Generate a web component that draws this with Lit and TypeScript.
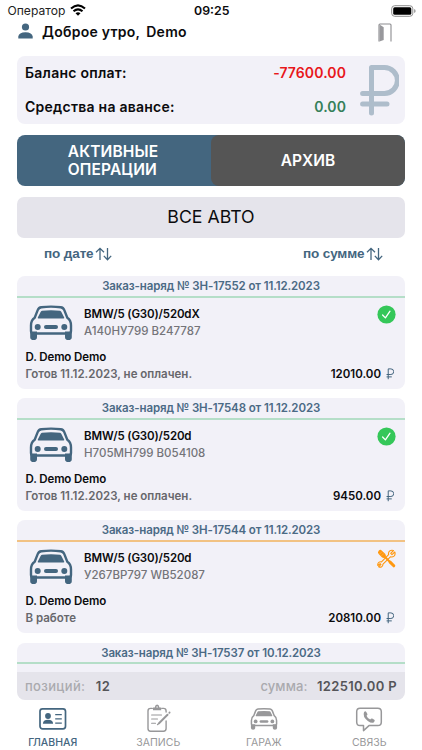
import { LitElement, html, css, svg, nothing } from "lit";
import { customElement, property } from "lit/decorators.js";

type Status = "done" | "work";

interface Order {
  title: string;
  status: Status;
  car?: string;
  plate?: string;
  owner?: string;
  state?: string;
  sum?: string;
}

const orders: Order[] = [
  { title: "Заказ-наряд № ЗН-17552 от 11.12.2023", car: "BMW/5 (G30)/520dX", plate: "А140НУ799 B247787", owner: "D. Demo Demo", state: "Готов 11.12.2023, не оплачен.", sum: "12010.00", status: "done" },
  { title: "Заказ-наряд № ЗН-17548 от 11.12.2023", car: "BMW/5 (G30)/520d", plate: "Н705МН799 B054108", owner: "D. Demo Demo", state: "Готов 11.12.2023, не оплачен.", sum: "9450.00", status: "done" },
  { title: "Заказ-наряд № ЗН-17544 от 11.12.2023", car: "BMW/5 (G30)/520d", plate: "У267ВР797 WB52087", owner: "D. Demo Demo", state: "В работе", sum: "20810.00", status: "work" },
  { title: "Заказ-наряд № ЗН-17537 от 10.12.2023", status: "done" },
];

const carIcon = (cls: string) => html`
  <svg class=${cls} viewBox="0 0 44 35" fill="currentColor">
    <path d="M12.300 1.700Q22 0.500 31.700 1.700Q34.300 2 35.300 4.600L38.300 12.200Q42 14.600 42 20V25.500Q42 28 39.500 28H4.500Q2 28 2 25.500V20Q2 14.600 5.700 12.200L8.700 4.600Q9.700 2 12.300 1.700Z" fill="none" stroke="currentColor" stroke-width="2.400"/>
    <path d="M1.200 26H8V31.700Q8 34.500 4.600 34.500T1.200 31.700ZM36 26H42.800V31.700Q42.800 34.500 39.400 34.500T36 31.700Z"/>
    <path d="M13 5.200Q22 4.200 31 5.200Q32 5.400 32.400 6.400L35.200 12Q35.500 13 34.500 13H9.500Q8.500 13 8.800 12L11.600 6.400Q12 5.400 13 5.200Z"/>
    <circle cx="8.700" cy="21.400" r="3"/><circle cx="35.300" cy="21.400" r="3"/>
    <rect x="15" y="19.400" width="14" height="4" rx="2"/>
  </svg>`;

const rubleShape = svg`<path d="M10 49V2.500H22A12.300 12.300 0 0 1 22 27.800H2.500M2.500 38.500H26"/>`;

const icons = {
  card: html`<svg viewBox="0 0 28 28" fill="none" stroke="currentColor" stroke-width="1.700">
    <rect x="1" y="3.800" width="25.500" height="20" rx="2.500"/>
    <circle cx="9" cy="11" r="2.900" fill="currentColor" stroke="none"/>
    <path d="M3.900 18.800Q4 14.800 9 14.800T14.100 18.800Z" fill="currentColor" stroke="none"/>
    <path d="M16.200 9.700H22.800M16.200 13.900H22.800M16.200 18.200H22.800" stroke-width="1.200"/></svg>`,
  note: html`<svg viewBox="0 0 28 28" fill="none" stroke="currentColor" stroke-width="1.400" stroke-linecap="round">
    <path d="M8.300 3.400H6.500Q4 3.400 4 6V23.500Q4 26.200 6.500 26.200H19.500Q22.100 26.200 22.100 23.500V16M17.800 3.400H19.600Q22.100 3.400 22.100 6V7"/>
    <path d="M9 5.200V2.500H10.700Q11.200 -0.400 13.100 -0.400T15.500 2.500H17.200V5.200Z" fill="currentColor" stroke="none"/>
    <circle cx="13.100" cy="2" r="0.700" fill="#fff" stroke="none"/>
    <path d="M7.600 10H17.500M7.600 14H13.500M7.600 18.300H11.500" stroke-width="1.100"/>
    <path d="M15 18.200L23.500 9.700" stroke-width="2"/><path d="M25.300 7.800L25.600 7.500" stroke-width="1.800"/><path d="M13.600 19.500L14.500 18.800"/></svg>`,
  garage: carIcon("tabcar"),
  phone: html`<svg viewBox="0 0 28 28" fill="none" stroke="currentColor" stroke-width="1.500" stroke-linejoin="round">
    <path d="M5 3.300H22.800Q26.300 3.300 26.300 6.800V17Q26.300 20.600 22.800 20.600H14L8.500 25.600V20.600H5Q1.700 20.600 1.700 17V6.800Q1.700 3.300 5 3.300Z"/>
    <path d="M9 7.200Q10.300 5.500 11.300 7L12.400 8.900Q12.700 9.700 11.500 10.800Q12.300 13.200 15.200 14.400Q16.300 13.200 17.200 13.600L19.300 14.700Q20.500 15.600 18.900 17.200Q17 19 12.800 15.900Q7.300 11.500 9 7.200Z" fill="currentColor" stroke="none"/></svg>`,
};

@customElement("sort-button")
class SortButton extends LitElement {
  @property() label = "";
  static styles = css`
    :host { display: flex; align-items: center; gap: 1.500px; height: 20px; color: #44667f; font: 700 13.500px/20px "Liberation Sans", sans-serif; letter-spacing: -0.120px; white-space: nowrap; }
    svg { width: 17px; height: 14px; fill: none; stroke: currentColor; stroke-width: 1.300; }
  `;
  render() {
    return html`<span>${this.label}</span><svg viewBox="0 0 17 14"><path d="M5 13V1.500M1 5.300L5 1.300L9 5.300M12.500 1V12.500M8.800 8.900L12.500 12.700L16.200 8.900"/></svg>`;
  }
}

@customElement("order-card")
class OrderCard extends LitElement {
  @property({ attribute: false }) order!: Order;
  static styles = css`
    :host { display: block; flex-shrink: 0; height: 113px; border-radius: 8px; background: #f2f1f8; overflow: hidden; color: #0b0b0d; font-size: 11.500px; font-weight: 600; }
    .title { box-sizing: border-box; height: 21.500px; line-height: 20.500px; border-bottom: 2.500px solid #b5dec8; text-align: center; color: #4b6a85; letter-spacing: -0.110px; white-space: nowrap; }
    .title.work { border-color: #f2c283; }
    .main { display: flex; height: 51px; padding: 7px 9px 0 12px; box-sizing: border-box; }
    .car { width: 44px; height: 36px; color: #44667f; margin-top: 0.500px; }
    .names { flex: 1; padding: 1.500px 0 0 11px; line-height: 17px; white-space: nowrap; }
    .name { letter-spacing: -0.150px; }
    .grey { color: #747479; font-weight: 500; }
    .badge { width: 19px; height: 19px; margin: 0.500px 0 0 auto; }
    .owner { line-height: 16px; padding: 0 8.500px; letter-spacing: -0.120px; white-space: nowrap; }
    .bottom { display: flex; justify-content: space-between; padding: 1px 11px 0 8.500px; line-height: 17px; white-space: nowrap; }
    .state { color: #67676c; }
    .sum { display: flex; align-items: center; gap: 5px; }
    .rub { width: 8px; height: 12px; margin-top: -1px; fill: none; stroke: #44667f; stroke-width: 4.500; }
  `;
  render() {
    const o = this.order;
    return html`
      <div class="title ${o.status}">${o.title}</div>
      <div class="main">
        ${o.car ? html`${carIcon("car")}<div class="names"><div class="name">${o.car}</div><div class="grey">${o.plate}</div></div>` : nothing}
        ${o.status === "done"
          ? html`<svg class="badge" viewBox="0 0 19 19"><circle cx="9.500" cy="9.500" r="9.100" fill="#35c759"/><path d="M5.600 10L8.400 12.900L13 6.200" fill="none" stroke="#fff" stroke-width="1.300" stroke-linecap="round" stroke-linejoin="round"/></svg>`
          : html`<svg class="badge" viewBox="0 0 19 19" fill="none" stroke="#ff9810" stroke-linecap="round" stroke-linejoin="round">
              <path d="M16.500 1.500L13.700 4.300L15 5.600L17.800 3Q18.700 5.500 17 7.100Q15.400 8.400 13.400 7.800L6 15.100Q6 17.200 4.400 17.900Q3.100 18.500 1.600 17.700L3.900 15.700L3.100 14.700L0.800 16.500Q0.400 14.600 1.800 13.400Q3 12.400 4.500 12.900L11.600 5.700Q11.100 3.700 12.500 2.200Q14.100 0.700 16.500 1.500Z" stroke-width="1.100"/>
              <path d="M3.300 3.300L6.500 6.500" stroke-width="4.600"/><path d="M7 7L13 13" stroke-width="2"/><path d="M13.100 13.100L16.800 16.800" stroke-width="3"/><path d="M3 4.700L4.700 3M4.800 6.500L6.500 4.800" stroke="#ffc988" stroke-width="0.400"/></svg>`}
      </div>
      ${o.owner
        ? html`<div class="owner">${o.owner}</div>
      <div class="bottom"><span class="state">${o.state}</span><span class="sum"><span>${o.sum}</span><svg class="rub" viewBox="0 0 36 51">${rubleShape}</svg></span></div>`
        : nothing}`;
  }
}

@customElement("app-root")
class AppRoot extends LitElement {
  static styles = css`
    :host { display: flex; flex-direction: column; position: relative; width: 422px; height: 750px; overflow: hidden; background: #fff; color: #0b0b0d; font-family: Inter, sans-serif; }
    :host > div { flex-shrink: 0; }
    .status { display: grid; grid-template-columns: 1fr auto 1fr; align-items: center; height: 21px; padding: 0 6px 0 7.500px; }
    .carrier { display: flex; align-items: center; gap: 5px; font-size: 12.100px; line-height: 20px; color: #222; }
    .wifi { width: 16px; height: 12px; margin-top: -2px; }
    .clock { font-size: 12.300px; font-weight: 600; line-height: 20px; padding-top: 1px; }
    .battery { width: 25px; height: 12px; justify-self: end; }
    .hello { display: flex; align-items: center; height: 20px; padding: 0 30px 0 18px; font-size: 14px; font-weight: 600; letter-spacing: 0.250px; }
    .user { width: 15px; height: 16px; margin-right: 9px; }
    .greet { margin-right: 6px; }
    .door { width: 14px; height: 19px; margin: 3px 0 0 auto; }
    .balance { display: flex; box-sizing: border-box; height: 68px; margin: 15px 17px 0; border-radius: 8px; background: #f2f1f8; padding: 0 6px 0 8px; font-size: 14px; font-weight: 600; letter-spacing: 0.250px; }
    .rows { flex: 1; padding-right: 14px; }
    .row { display: flex; justify-content: space-between; line-height: 34px; height: 34px; }
    .neg { color: #e8171b; letter-spacing: 0.100px; }
    .pos { color: #35805a; letter-spacing: 0.100px; }
    .big { width: 39px; height: 51px; margin-top: 9px; fill: none; stroke: #aebdcb; stroke-width: 5; stroke-linecap: round; stroke-linejoin: round; }
    .tabs { display: flex; height: 51px; margin: 11px 17px 0; border-radius: 8px; background: #44667f; color: #fff; font-size: 15.500px; font-weight: 600; line-height: 18px; overflow: hidden; }
    .tab { display: flex; align-items: center; width: 194px; justify-content: center; box-sizing: border-box; padding-right: 2px; letter-spacing: 0.150px; }
    .archive { background: #555; border-radius: 8px; flex: 1; padding-right: 0; letter-spacing: 0; }
    .all { height: 41px; line-height: 40px; margin: 11px 17px 0; border-radius: 7px; background: #e5e4eb; text-align: center; font-size: 17.700px; font-weight: 400; }
    .sorts { display: flex; justify-content: space-between; padding: 0 39px 0 44px; height: 20px; margin-top: 6px; }
    .list { display: flex; flex-direction: column; gap: 9.200px; height: 408px; box-sizing: border-box; overflow: hidden; padding: 12px 17px 0; }
    .totals { box-sizing: border-box; height: 28px; margin: 0 17px; display: flex; align-items: center; padding: 0 8px; border-radius: 0 0 8px 8px; background: #e5e4eb; font-size: 13px; font-weight: 600; color: #555559; letter-spacing: 0.350px; white-space: nowrap; }
    .muted { color: #aaaaae; font-weight: 500; }
    .count { margin-left: 10.500px; }
    .sumlabel { margin-left: auto; margin-right: 9.500px; letter-spacing: 0.100px; }
    .nav { height: 50px; display: grid; grid-template-columns: repeat(4, 1fr); color: #98989a; font-size: 10.500px; font-weight: 400; }
    .item { display: flex; flex-direction: column; align-items: center; line-height: 14px; padding-top: 5px; gap: 2.500px; }
    .item svg { width: 28px; height: 28px; overflow: visible; }
    .item .tabcar { width: 28px; height: 22px; padding: 3px 0; }
    .item.on { color: #44667f; font-weight: 500; }
  `;
  render() {
    const nav = [["ГЛАВНАЯ", icons.card], ["ЗАПИСЬ", icons.note], ["ГАРАЖ", icons.garage], ["СВЯЗЬ", icons.phone]] as const;
    return html`
      <div class="status">
        <div class="carrier"><span>Оператор</span><svg class="wifi" viewBox="0 0 16 12" fill="none" stroke="#000" stroke-width="2.100"><path d="M1 4.600Q8 -1.800 15 4.600M3.500 7.300Q8 3.400 12.500 7.300"/><path d="M5.500 9.200Q8 7.200 10.500 9.200L8 11.800Z" fill="#000" stroke="none"/></svg></div>
        <div class="clock">09:25</div>
        <svg class="battery" viewBox="0 0 25 12"><rect x="0.700" y="0.700" width="21.100" height="10.600" rx="3" fill="none" stroke="#8e8e8e"/><rect x="2.200" y="2.200" width="18.100" height="7.600" rx="1.500"/><path d="M23.200 4Q24.600 4.600 24.600 6T23.200 8Z" fill="#8e8e8e"/></svg>
      </div>
      <div class="hello">
        <svg class="user" viewBox="0 0 15 16" fill="#44667f"><circle cx="7.500" cy="4" r="3.600"/><path d="M0.300 15.500V13.500Q0.800 9.500 7.500 9.300Q14.200 9.500 14.700 13.500V15.500Z"/></svg>
        <span class="greet">Доброе утро,</span><span class="demo">Demo</span>
        <svg class="door" viewBox="0 0 14 19"><path d="M1 18.500V2Q1 1 2 1H12Q13 1 13 2V18.500" fill="none" stroke="#8c8c90" stroke-width="1.100"/><path d="M1.500 1.500L5.700 4.200V17L1.500 18.500Z" fill="#98989c"/></svg>
      </div>
      <div class="balance">
        <div class="rows">
          <div class="row"><span>Баланс оплат:</span><span class="neg">-77600.00</span></div>
          <div class="row"><span>Средства на авансе:</span><span class="pos">0.00</span></div>
        </div>
        <svg class="big" viewBox="0 0 39 51"><path d="M11.500 48V2.600H24.500A12.800 12.800 0 0 1 24.500 28.400H2.600M2.600 39H27"/></svg>
      </div>
      <div class="tabs"><div class="tab"><span>АКТИВНЫЕ<br>ОПЕРАЦИИ</span></div><div class="tab archive">АРХИВ</div></div>
      <div class="all">ВСЕ АВТО</div>
      <div class="sorts"><sort-button label="по дате"></sort-button><sort-button label="по сумме"></sort-button></div>
      <div class="list">${orders.map((o) => html`<order-card .order=${o}></order-card>`)}</div>
      <div class="totals"><span class="muted">позиций:</span><span class="count">12</span><span class="muted sumlabel">сумма:</span><span class="total">122510.00 Р</span></div>
      <div class="nav">${nav.map(([label, icon], i) => html`<div class="item ${i === 0 ? "on" : ""}">${icon}<span>${label}</span></div>`)}</div>`;
  }
}
